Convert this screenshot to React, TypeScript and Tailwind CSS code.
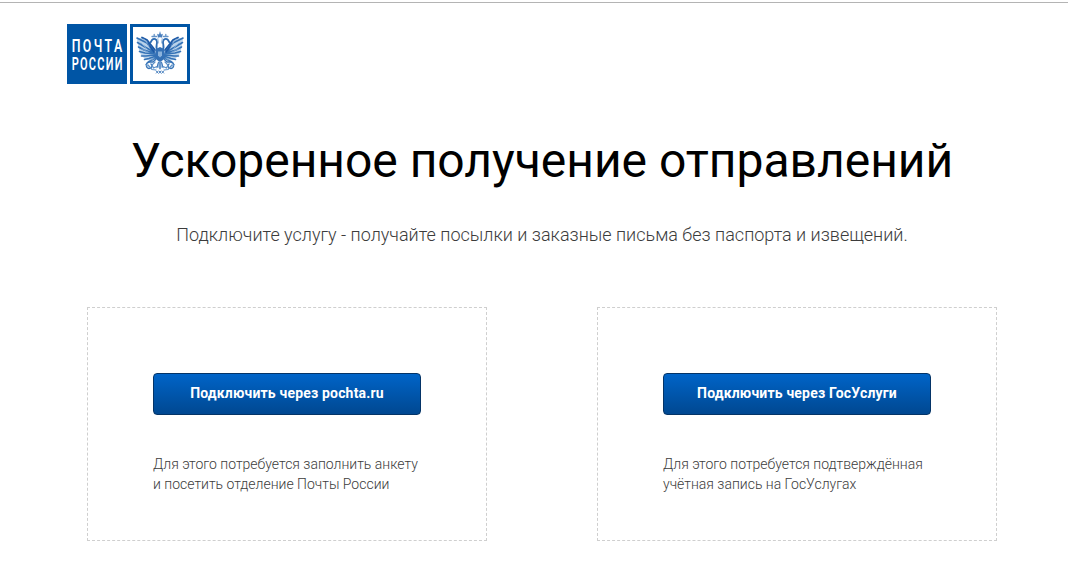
import type { ReactNode } from 'react';

type Option = {
  id: string;
  action: string;
  note: ReactNode;
};

const options: Option[] = [
  {
    id: 'pochta',
    action: 'Подключить через pochta.ru',
    note: (
      <>
        Для этого потребуется заполнить анкету
        <br />и посетить отделение Почты России
      </>
    ),
  },
  {
    id: 'gosuslugi',
    action: 'Подключить через ГосУслуги',
    note: (
      <>
        Для этого потребуется подтверждённая
        <br />
        учётная запись на ГосУслугах
      </>
    ),
  },
];

// One side of the eagle. The other side is the same drawing mirrored at x=30.
function EagleHalf() {
  return (
    <g fill="none" strokeLinecap="round">
      {/* wing: pale base, then a fan of feathers from the shoulder */}
      <path d="M26 26L22 21L18 16L13 13L7 15L8 21L9 26L11 31L15 35L20 37L27 33Z" fill="#b9d2ea" />
      <path
        d="M24 27L17 19L7 14M24 28L15 23L7.5 18.5M24 29L14 26L8.5 23M25 30L15 29L9.5 27.5M25 31L16 32L11.5 32M26 32L19 34.5L14.5 35.5M27 33L22 36L18.5 38"
        stroke="#3472b6"
        strokeWidth="1.6"
      />
      <path d="M12 13.5L17 16L21 21L25 26M18 20L21 24L24 28" stroke="#1c58a5" strokeWidth="1.7" />
      <path d="M14 15L19 22M11 19L17 25M12 25L18 28" stroke="#7da8d5" strokeWidth="0.8" />
      {/* neck, head and beak */}
      <path d="M28 27C25 24 27 21 27 18C27 15 24 14 22 16L20.5 18.5" stroke="#2f6cb2" strokeWidth="1.8" />
      {/* small crown */}
      <path d="M22 12.5H26.5M24.2 10.5V12.5" stroke="#6694c8" strokeWidth="1.3" />
      {/* ribbon running down from the top crown */}
      <path d="M29 13C26.5 13.5 28.5 16 28.5 19" stroke="#8bb0d8" strokeWidth="0.9" />
      {/* leg, claw and post horn */}
      <path d="M27 34L23 38L19 38C15 39 16 44 19 44.5C22 44.5 23 41.5 21 40" stroke="#3874b7" strokeWidth="1.4" />
      <path d="M25 38L22 41L23.5 44L28 42M18 41L22 45.5L26 46" stroke="#5d91c8" strokeWidth="1.2" />
      <path d="M15.5 40.5L18 42M24 34.5L21 36" stroke="#79a5d3" strokeWidth="1" />
    </g>
  );
}

function Logo() {
  return (
    <svg className="block" width="123" height="60" viewBox="0 0 123 60" role="img" aria-label="Почта России">
      <rect width="60" height="60" fill="#0055a5" />
      {/* narrow, tall lettering: both lines span the same width */}
      <g fill="#fff" fontFamily="Roboto, sans-serif" fontSize="17.5" fontWeight="600">
        <text x="4.7" y="28" textLength="53" lengthAdjust="spacingAndGlyphs" letterSpacing="3.5">
          ПОЧТА
        </text>
        <text x="4.7" y="46.2" textLength="52" lengthAdjust="spacingAndGlyphs" letterSpacing="2">
          РОССИИ
        </text>
      </g>
      <g transform="translate(63 0)">
        <rect x="1.5" y="1.5" width="57" height="57" fill="#fff" stroke="#0055a5" strokeWidth="3" />
        <EagleHalf />
        <g transform="matrix(-1 0 0 1 60 0)">
          <EagleHalf />
        </g>
        {/* body and shield */}
        <path d="M26 25L30 23L34 25L35 31L33 36L30 38L27 36L25 31Z" fill="#3470b5" />
        <path d="M28 27.5H32V31.5L30 33.5L28 31.5Z" fill="#8cb3dc" />
        {/* tail */}
        <path d="M28.5 37L26 44.5L28.5 43.5L30 46L31.5 43.5L34 44.5L31.5 37Z" fill="#9cbde0" />
        <path d="M30 37V45M28.5 38L27 43.5M31.5 38L33 43.5" stroke="#3a75b8" strokeWidth="1" />
        {/* top crown */}
        <path d="M27.8 13.2L27.2 9.8L29 10.5L30 7L31 10.5L32.8 9.8L32.2 13.2Z" fill="#4a7fbe" />
        <path d="M26 46.8L28.4 49.4M28.4 46.8L26 49.4M28.8 46.8L31.2 49.4M31.2 46.8L28.8 49.4M31.6 46.8L34 49.4M34 46.8L31.6 49.4" stroke="#3f79ba" strokeWidth="0.9" />
      </g>
    </svg>
  );
}

function OptionCard({ option }: { option: Option }) {
  return (
    <section className="h-[234px] w-[400px] border border-dashed border-[#cfcfcf] p-[65px]">
      <button
        type="button"
        className="block h-[42px] w-[268px] rounded-[4px] border border-[#043467] bg-linear-to-b from-[#0064c8] to-[#004891] pb-0.5 text-sm font-bold tracking-[0.18px] text-white"
      >
        {option.action}
      </button>
      <p className="mt-[39px] text-sm leading-5 font-light whitespace-nowrap text-[#3c3c3c]">{option.note}</p>
    </section>
  );
}

export default function App() {
  return (
    <div className="h-[568px] overflow-hidden bg-white pt-[2px] font-[Roboto,sans-serif]">
      <div className="h-px bg-[#b4b4b4]" />
      <main className="ml-[57px] w-[970px]">
        <header className="px-2.5 pt-[21px]">
          <Logo />
        </header>
        <h1 className="mt-[47px] text-center text-5xl leading-[60px] font-normal tracking-[-0.02px] whitespace-nowrap text-black">
          Ускоренное получение отправлений
        </h1>
        <p className="mt-[30px] text-center text-lg leading-7 font-light text-[#3c3c3c]">
          Подключите услугу - получайте посылки и заказные письма без паспорта и извещений.
        </p>
        <div className="mt-[58px] flex justify-between px-[30px]">
          {options.map((o) => (
            <OptionCard key={o.id} option={o} />
          ))}
        </div>
      </main>
    </div>
  );
}
